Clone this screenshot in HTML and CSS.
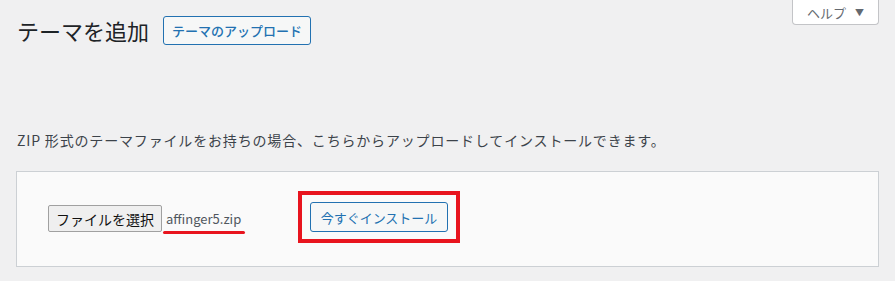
FILE: index.html
```html
<!DOCTYPE html>
<html lang="ja">
<head>
<meta charset="utf-8">
<title>テーマを追加</title>
<link rel="stylesheet" href="styles.css">
</head>
<body>
<div class="help-tab">ヘルプ <span class="arrow">▼</span></div>
<div class="wrap">
  <div class="title-row">
    <h1 class="page-title">テーマを追加</h1>
    <button class="upload-btn">テーマのアップロード</button>
  </div>
  <p class="desc">ZIP 形式のテーマファイルをお持ちの場合、こちらからアップロードしてインストールできます。</p>
  <div class="upload-box">
    <div class="file-field">
      <button class="file-btn">ファイルを選択</button>
      <span class="file-name">affinger5.zip</span>
    </div>
    <div class="highlight">
      <button class="install-btn">今すぐインストール</button>
    </div>
  </div>
</div>
</body>
</html>
```
FILE: styles.css
```css
* { box-sizing: border-box; }
html, body {
  margin: 0;
  padding: 0;
  background: #f0f0f1;
  font-family: "Noto Sans CJK JP", "Noto Sans", sans-serif;
  color: #3c434a;
}
body { position: relative; width: 895px; height: 281px; overflow: hidden; }

.help-tab {
  position: absolute;
  top: -1px;
  left: 792px;
  width: 87px;
  height: 26px;
  background: #fff;
  border: 1px solid #c3c4c7;
  border-top: none;
  border-radius: 0 0 4px 4px;
  font-size: 13px;
  color: #646970;
  display: flex;
  align-items: center;
  justify-content: center;
  gap: 9px;
  padding-top: 1px;
}
.help-tab .arrow { font-size: 9px; color: #646970; }

.wrap { padding: 16px 16px 0 16px; }

.title-row {
  display: flex;
  align-items: center;
  height: 29px;
}
.page-title {
  margin: 0;
  width: 147px;
  font-size: 22px;
  font-weight: 400;
  color: #1d2327;
  line-height: 29px;
  padding-left: 1px;
}
.upload-btn {
  height: 29px;
  width: 148px;
  padding: 0;
  border: 1px solid #2271b1;
  border-radius: 3px;
  background: #f6f7f7;
  color: #2271b1;
  font-family: inherit;
  font-size: 13px;
  font-weight: 500;
}

.desc {
  margin: 85px 0 0 1px;
  font-size: 14px;
  line-height: 20px;
  letter-spacing: 0.83px;
  color: #3c434a;
}

.upload-box {
  margin-top: 21px;
  width: 863px;
  height: 96px;
  background: #fafafa;
  border: 1px solid #ccd0d4;
  display: flex;
  align-items: flex-start;
  padding: 19px 0 0 31px;
}
.file-field {
  display: flex;
  align-items: center;
  width: 250px;
  margin-top: 14px;
}
.file-btn {
  width: 114px;
  height: 27px;
  padding: 0;
  background: #efefef;
  border: 1px solid #a0a0a0;
  border-radius: 2px;
  font-family: inherit;
  font-size: 14px;
  color: #111;
}
.file-name {
  position: relative;
  margin-left: 4px;
  font-size: 13px;
  color: #50575e;
  line-height: 20px;
}
.file-name::after {
  content: "";
  position: absolute;
  left: -3px;
  right: -4px;
  bottom: -5px;
  height: 3px;
  border-radius: 2px;
  background: #e8141e;
}
.highlight {
  border: 4px solid #e8141e;
  padding: 7px 8px;
  display: flex;
}
.install-btn {
  width: 138px;
  height: 30px;
  padding: 0;
  border: 1px solid #2271b1;
  border-radius: 3px;
  background: #f6f7f7;
  color: #2271b1;
  font-family: inherit;
  font-size: 13px;
}
```
